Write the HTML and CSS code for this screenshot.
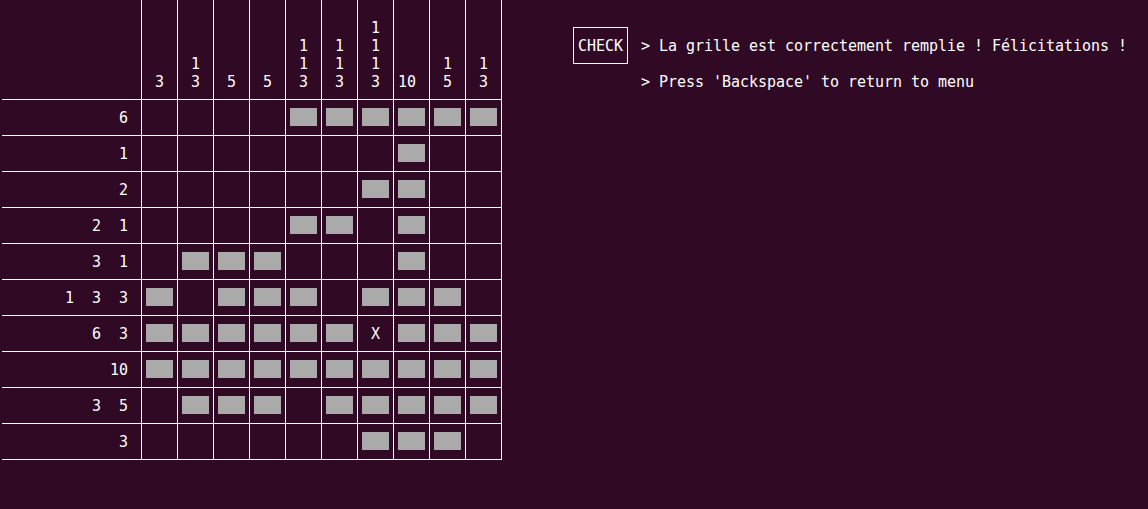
FILE: index.html
```html
<!DOCTYPE html>
<html lang="fr">
<head>
<meta charset="utf-8">
<title>Picross</title>
<link rel="stylesheet" href="styles.css">
</head>
<body>
<div class="screen">
  <div class="board">
    <div class="corner"></div>
    <div class="cc">3</div>
    <div class="cc">1<br>3</div>
    <div class="cc">5</div>
    <div class="cc">5</div>
    <div class="cc">1<br>1<br>3</div>
    <div class="cc">1<br>1<br>3</div>
    <div class="cc">1<br>1<br>1<br>3</div>
    <div class="cc">10</div>
    <div class="cc">1<br>5</div>
    <div class="cc">1<br>3</div>

    <div class="rc">6</div>
    <div class="c"></div><div class="c"></div><div class="c"></div><div class="c"></div><div class="c f"></div><div class="c f"></div><div class="c f"></div><div class="c f"></div><div class="c f"></div><div class="c f"></div>

    <div class="rc">1</div>
    <div class="c"></div><div class="c"></div><div class="c"></div><div class="c"></div><div class="c"></div><div class="c"></div><div class="c"></div><div class="c f"></div><div class="c"></div><div class="c"></div>

    <div class="rc">2</div>
    <div class="c"></div><div class="c"></div><div class="c"></div><div class="c"></div><div class="c"></div><div class="c"></div><div class="c f"></div><div class="c f"></div><div class="c"></div><div class="c"></div>

    <div class="rc">2  1</div>
    <div class="c"></div><div class="c"></div><div class="c"></div><div class="c"></div><div class="c f"></div><div class="c f"></div><div class="c"></div><div class="c f"></div><div class="c"></div><div class="c"></div>

    <div class="rc">3  1</div>
    <div class="c"></div><div class="c f"></div><div class="c f"></div><div class="c f"></div><div class="c"></div><div class="c"></div><div class="c"></div><div class="c f"></div><div class="c"></div><div class="c"></div>

    <div class="rc">1  3  3</div>
    <div class="c f"></div><div class="c"></div><div class="c f"></div><div class="c f"></div><div class="c f"></div><div class="c"></div><div class="c f"></div><div class="c f"></div><div class="c f"></div><div class="c"></div>

    <div class="rc">6  3</div>
    <div class="c f"></div><div class="c f"></div><div class="c f"></div><div class="c f"></div><div class="c f"></div><div class="c f"></div><div class="c x">X</div><div class="c f"></div><div class="c f"></div><div class="c f"></div>

    <div class="rc">10</div>
    <div class="c f"></div><div class="c f"></div><div class="c f"></div><div class="c f"></div><div class="c f"></div><div class="c f"></div><div class="c f"></div><div class="c f"></div><div class="c f"></div><div class="c f"></div>

    <div class="rc">3  5</div>
    <div class="c"></div><div class="c f"></div><div class="c f"></div><div class="c f"></div><div class="c"></div><div class="c f"></div><div class="c f"></div><div class="c f"></div><div class="c f"></div><div class="c f"></div>

    <div class="rc">3</div>
    <div class="c"></div><div class="c"></div><div class="c"></div><div class="c"></div><div class="c"></div><div class="c"></div><div class="c f"></div><div class="c f"></div><div class="c f"></div><div class="c"></div>
  </div>

  <div class="panel">
    <div class="check">CHECK</div>
    <div class="messages">
      <div class="msg">&gt; La grille est correctement remplie ! Félicitations !</div>
      <div class="msg">&gt; Press 'Backspace' to return to menu</div>
    </div>
  </div>
</div>
</body>
</html>
```

FILE: styles.css
```css
html, body {
  margin: 0;
  padding: 0;
  background: #300a24;
}

body {
  color: #ffffff;
  font-family: "DejaVu Sans Mono", monospace;
  font-size: 15px;
  line-height: 18px;
  letter-spacing: -0.03px;
}

.screen {
  display: flex;
  align-items: flex-start;
}

.board {
  display: grid;
  grid-template-columns: 139px repeat(10, 35px);
  grid-template-rows: 99px repeat(10, 35px);
  gap: 1px;
  padding: 0 1px 1px 0;
  margin-left: 2px;
  background: #ffffff;
}

.board > div {
  background: #300a24;
}

.cc {
  display: flex;
  flex-direction: column;
  justify-content: flex-end;
  align-items: flex-end;
  padding: 0 13px 8px 0;
  text-align: right;
}

.rc {
  text-align: right;
  white-space: pre;
  padding: 9px 13px 0 0;
}

.f::before {
  content: "";
  display: block;
  width: 27px;
  height: 18px;
  margin: 8px 0 0 4px;
  background: #aaaaaa;
}

.x {
  text-align: center;
  padding-top: 9px;
}

.panel {
  display: flex;
  align-items: flex-start;
  gap: 13px;
  margin: 27px 0 0 71px;
}

.check {
  border: 1px solid #ffffff;
  padding: 9px 4px 8px;
  white-space: nowrap;
}

.messages {
  display: flex;
  flex-direction: column;
  gap: 18px;
  margin-top: 10px;
  white-space: pre;
}
```
